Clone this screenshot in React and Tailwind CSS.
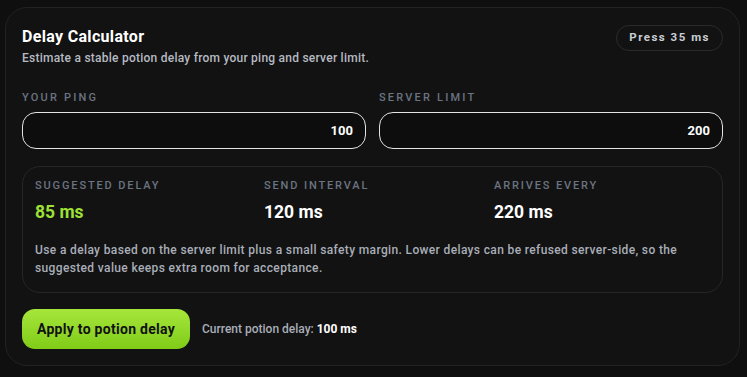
import { useState } from "react";

const font = { fontFamily: "Roboto, 'DejaVu Sans', sans-serif" };

const Stat = ({ label, value, accent }) => {
  return (
    <div className="flex flex-col">
      <p className="text-[11px] leading-[14px] tracking-[0.17em] text-[#6b7482] font-medium">{label}</p>
      <p className={`mt-[8px] text-[17.5px] leading-[22px] font-bold ${accent ? "text-[#9ee035]" : "text-white"}`}>
        {value}
      </p>
    </div>
  );
};

const App = () => {
  const [ping, setPing] = useState("100");
  const [limit, setLimit] = useState("200");

  return (
    <div className="w-[747px] h-[377px] bg-[#0f0f0f] pt-[7px] pl-[5px] pr-[7px]" style={font}>
      <div className="h-[359px] rounded-[22px] border border-[#222222] bg-[#121212] px-[16px] pt-[19px]">
        {/* heading */}
        <section className="flex justify-between items-start">
          <div>
            <h2 className="text-[16px] leading-[20px] font-bold tracking-[0.02em] text-white">Delay Calculator</h2>
            <p className="mt-[3px] text-[12px] leading-[16px] font-medium tracking-[0.02em] text-[#b6bac2]">
              Estimate a stable potion delay from your ping and server limit.
            </p>
          </div>
          <span className="mt-[-2px] px-[12px] h-[26px] flex items-center rounded-full border border-[#2a2a2a] text-[11.5px] font-bold tracking-[0.13em] text-[#c9cdd4]">
            Press 35 ms
          </span>
        </section>

        {/* inputs */}
        <section className="mt-[25px] grid grid-cols-2 gap-[13px]">
          <label className="flex flex-col">
            <span className="text-[11px] leading-[14px] tracking-[0.2em] text-[#6b7482] font-medium">YOUR PING</span>
            <input
              className="mt-[7px] h-[37px] rounded-[14px] border border-[#e4e4e4] bg-[#0d0d0d] px-[12px] text-right text-[13px] font-bold text-white outline-none"
              value={ping}
              onChange={(e) => setPing(e.target.value)}
            />
          </label>
          <label className="flex flex-col">
            <span className="text-[11px] leading-[14px] tracking-[0.2em] text-[#6b7482] font-medium">SERVER LIMIT</span>
            <input
              className="mt-[7px] h-[37px] rounded-[14px] border border-[#e4e4e4] bg-[#0d0d0d] px-[12px] text-right text-[13px] font-bold text-white outline-none"
              value={limit}
              onChange={(e) => setLimit(e.target.value)}
            />
          </label>
        </section>

        {/* result panel */}
        <section className="mt-[17px] h-[127px] rounded-[18px] border border-[#262626] px-[12px] pt-[12px]">
          <div className="grid grid-cols-[229px_230px_1fr]">
            <Stat label="SUGGESTED DELAY" value="85 ms" accent />
            <Stat label="SEND INTERVAL" value="120 ms" />
            <Stat label="ARRIVES EVERY" value="220 ms" />
          </div>
          <p className="mt-[18px] text-[12px] leading-[18px] font-medium tracking-[0.03em] text-[#a9aeb8] max-w-[672px]">
            Use a delay based on the server limit plus a small safety margin. Lower delays can be refused server-side, so the
            suggested value keeps extra room for acceptance.
          </p>
        </section>

        {/* apply */}
        <section className="mt-[16px] flex items-center gap-[12px]">
          <button className="h-[40px] px-[15px] rounded-[13px] bg-gradient-to-b from-[#a6e63a] to-[#80cc16] text-[14px] font-bold tracking-[0.02em] text-[#111111]">
            Apply to potion delay
          </button>
          <p className="text-[12px] font-medium text-[#a9aeb8]">
            Current potion delay: <span className="font-bold text-white">100 ms</span>
          </p>
        </section>
      </div>
    </div>
  );
};

export default App;
